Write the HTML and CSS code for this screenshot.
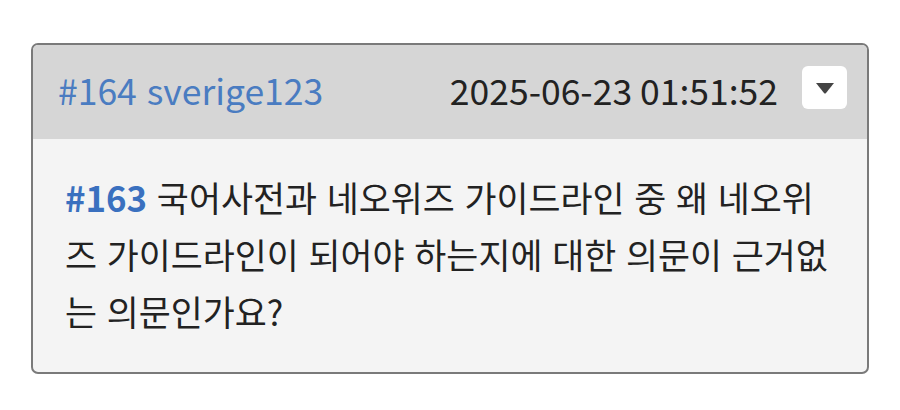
FILE: index.html
```html
<!DOCTYPE html>
<html lang="ko">
<head>
<meta charset="utf-8">
<link rel="stylesheet" href="styles.css">
</head>
<body>
<div class="comment">
  <div class="comment-head">
    <a class="author">#164 sverige123</a>
    <div class="meta">
      <span class="time" lang="en">2025-06-23 01:51:52</span>
      <button class="menu-btn" aria-label="메뉴">
        <svg width="20" height="12" viewBox="0 0 20 12"><path d="M1 1 H19 L11 11 Q10 12 9 11 Z" fill="#444"/></svg>
      </button>
    </div>
  </div>
  <div class="comment-body"><span class="ref">#163</span> 국어사전과 네오위즈 가이드라인 중 왜 네오위즈 가이드라인이 되어야 하는지에 대한 의문이 근거없는 의문인가요?</div>
</div>
</body>
</html>
```
FILE: styles.css
```css
html, body {
  margin: 0;
  padding: 0;
  background: #ffffff;
}
body {
  font-family: "Noto Sans CJK KR", "Noto Sans", sans-serif;
  padding: 43px 31px;
}
.comment {
  border: 2px solid #7a7a7a;
  border-radius: 7px;
  overflow: hidden;
  background: #f4f4f4;
}
.comment-head {
  background: #d6d6d6;
  height: 94px;
  box-sizing: border-box;
  display: flex;
  align-items: center;
  justify-content: space-between;
  padding: 0 20px 5px 25px;
}
.author {
  color: #4a7cc1;
  font-size: 35.5px;
}
.meta {
  display: flex;
  align-items: center;
  gap: 24px;
}
.time {
  color: #222;
  font-size: 35.5px;
  font-kerning: none;
  font-feature-settings: "calt" 0, "kern" 0;
}
.menu-btn {
  width: 45px;
  height: 43px;
  margin-bottom: 4px;
  background: #fff;
  border: none;
  border-radius: 6px;
  padding: 0;
  display: flex;
  align-items: center;
  justify-content: center;
}
.comment-body {
  padding: 30px 24px 32px 32px;
  font-size: 34.8px;
  line-height: 57px;
  color: #222;
  word-break: break-all;
}
.ref {
  color: #3a70bf;
  font-weight: 700;
}
```
